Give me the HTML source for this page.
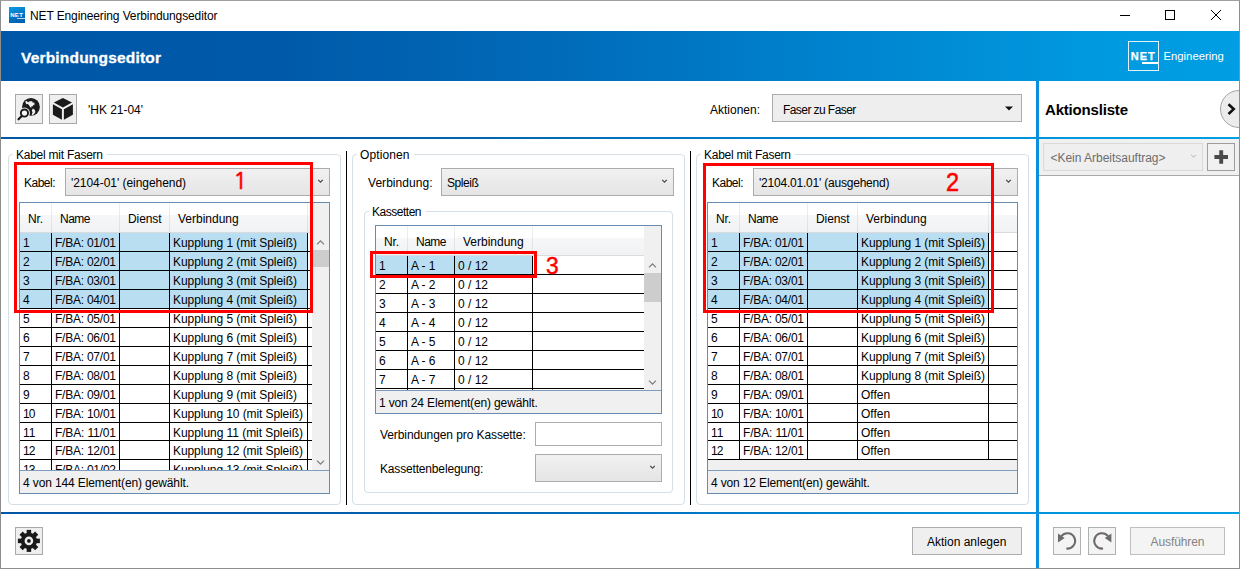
<!DOCTYPE html>
<html lang="de"><head><meta charset="utf-8"><title>NET Engineering Verbindungseditor</title>
<style>
*{box-sizing:border-box;margin:0;padding:0}
html,body{width:1240px;height:569px;overflow:hidden;background:#fff}
body{font-family:"Liberation Sans",sans-serif;font-size:12px;color:#000;position:relative}
.a{position:absolute}
.t{position:absolute;white-space:nowrap;line-height:16px;height:16px}
.b{font-weight:bold}
.win{position:absolute;left:0;top:0;width:1240px;height:569px;border:1px solid #8d8d8d;border-top-color:#a0a0a0;pointer-events:none;z-index:50}
.hdr{position:absolute;left:1px;top:31px;width:1238px;height:50px;background:linear-gradient(to right,#0057a7 0%,#0059a9 22%,#006bb9 45%,#0084cf 68%,#0099df 88%,#009ee3 100%)}
.hline{position:absolute;left:1px;width:1238px;height:2px;background:linear-gradient(to right,#0057a7 0%,#0059a9 22%,#006bb9 45%,#0084cf 68%,#0099df 88%,#009ee3 100%)}
.vline{position:absolute;left:1036px;top:81px;width:3px;height:487px;background:#0a8fdc}
.btn{position:absolute;background:#efefef;border:1px solid #a9a9a9}
.gb{position:absolute;border:1px solid #d5dfe5;border-radius:4px}
.gbl{position:absolute;background:#fff;height:14px}
.combo{position:absolute;height:28px;border:1px solid #acacac;background:linear-gradient(#f1f1f1,#e5e5e5)}
.chev{position:absolute;width:7px;height:4px;overflow:visible}
.lv{position:absolute;border:1px solid #688caf;background:#fff;overflow:hidden}
.lh{position:absolute;left:0;top:0;height:30px;width:100%;background:linear-gradient(#ffffff 0%,#ffffff 40%,#f6f7f9 41%,#f1f2f4 100%);border-bottom:1px solid #d9dbde}
.hs{position:absolute;top:0;width:1px;height:29px;background:linear-gradient(#f0f0f0,#dcdddf)}
.row{position:absolute;left:0;height:19px;border-bottom:1px solid #000}
.sel{position:absolute;left:0;height:19px;background:#b9def1}
.cv{position:absolute;width:1px;background:#000}
.c{position:absolute;white-space:nowrap;line-height:19px;height:19px}
.st{position:absolute;left:0;background:#f0f0f0;border-top:1px solid #7f9cbf}
.sb{position:absolute;background:#f0f0f0;width:17px}
.th{position:absolute;background:#cdcdcd}
.red{position:absolute;border:3px solid #ff0000;z-index:20}
.num{position:absolute;color:#ff0000;font-size:24px;line-height:28px;height:28px;z-index:21;white-space:nowrap;-webkit-text-stroke:0.5px #ff0000;transform-origin:0 50%;transform:scaleX(0.93)}
.split{position:absolute;width:1px;background:#000;top:151px;height:354px}
</style></head>
<body>
<div class="a" style="left:9px;top:7px;width:16px;height:16px;background:linear-gradient(160deg,#0b9be2 0%,#0577c6 50%,#0058a8 100%);overflow:hidden"><div class="a b" style="left:1.2px;top:4.6px;font-size:6px;line-height:7px;color:#fff;letter-spacing:0.35px">NET</div><div class="a" style="left:8px;top:11.4px;width:8px;height:0.8px;background:#b9dcf3"></div></div>
<div class="t ttl" style="left:30px;top:7.99px;letter-spacing:-0.117px;">NET Engineering Verbindungseditor</div>
<svg class="a" style="left:1110px;top:1px" width="128" height="30" viewBox="0 0 128 30"><path d="M10 14.5h10" stroke="#000" stroke-width="1" fill="none"/><rect x="55.5" y="9.5" width="9" height="9" stroke="#000" stroke-width="1" fill="none"/><path d="M101 9l10 10M111 9l-10 10" stroke="#000" stroke-width="1" fill="none"/></svg>
<div class="hdr"></div>
<div class="t b hd" style="left:21px;top:47.78px;letter-spacing:0.192px;color:#fff;font-size:15.5px;line-height:20px;height:20px;-webkit-text-stroke:0.3px #fff;">Verbindungseditor</div>
<div class="a" style="left:1128px;top:41px;width:31px;height:30px;border:1px solid rgba(255,255,255,0.88)"></div>
<div class="t b" style="left:1130.8px;top:49.3px;color:#fff;font-size:11px;letter-spacing:1px;line-height:14px;-webkit-text-stroke:0.25px #fff">NET</div>
<div class="a" style="left:1142px;top:62px;width:16px;height:1.5px;background:#fff"></div>
<div class="t" style="left:1163.5px;top:49px;color:#fff;font-size:11.3px;line-height:14px">Engineering</div>
<div class="btn" style="left:15px;top:94px;width:28px;height:30px"></div>
<div class="btn" style="left:49px;top:94px;width:28px;height:30px"></div>
<svg class="a" style="left:15px;top:94px" width="28" height="30" viewBox="0 0 28 30">
<circle cx="15.95" cy="12.9" r="8.9" fill="#1a1a1a"/>
<path d="M10.16 7.69 L11.78 6.68 L12.94 8.38 L14.64 7.15 L17.57 7.15 L17.11 8.38 L19.12 8.54 L19.82 10.55 L18.35 11.01 L17.88 12.25 L16.49 12.25 L16.18 13.95 L14.95 12.87 L13.87 11.01 L12.78 9.93 L11.39 10.24 Z" fill="#f0f0f0"/>
<path d="M17.88 14.57 L19.74 15.65 L20.36 17.97 L18.97 20.13 L17.27 21.37 L16.65 20.44 L17.57 18.58 L16.80 16.42 Z" fill="#f0f0f0"/>
<circle cx="9.45" cy="19.05" r="5.5" fill="#efefef"/>
<circle cx="9.45" cy="19.05" r="3.6" fill="#f6f6f6" stroke="#1a1a1a" stroke-width="1.9"/>
<path d="M6.5 22.2 L3.5 25.3" stroke="#1a1a1a" stroke-width="2.2" stroke-linecap="round"/>
</svg>
<svg class="a" style="left:49px;top:94px" width="28" height="30" viewBox="0 0 28 30">
<path d="M13.9 4 L23 8.4 L13.9 13.4 L4.8 8.4 Z" fill="#1a1a1a"/>
<path d="M3.9 10.2 L12.9 15.2 L12.9 25.8 L3.9 20.8 Z" fill="#1a1a1a"/>
<path d="M23.9 10.2 L14.9 15.2 L14.9 25.8 L23.9 20.8 Z" fill="#1a1a1a"/>
</svg>
<div class="t" style="left:88px;top:101.99px;letter-spacing:-0.031px;">&#x27;HK 21-04&#x27;</div>
<div class="t" style="left:710px;top:101.99px;">Aktionen:</div>
<div class="combo" style="left:772px;top:94px;width:250px;background:#eeeeee"></div>
<div class="t" style="left:783px;top:101.99px;letter-spacing:-0.572px;">Faser zu Faser</div>
<svg class="a" style="left:1004px;top:106px" width="10" height="5" viewBox="0 0 10 5"><path d="M1 0.5h8L5 4.5z" fill="#111"/></svg>
<div class="t b" style="left:1045px;top:99.95px;letter-spacing:-0.184px;font-size:15px;line-height:20px;height:20px;">Aktionsliste</div>
<div class="a" style="left:1220px;top:90px;width:38px;height:38px;border-radius:50%;background:#ececec;border:1.4px solid #a4a4a4"></div>
<svg class="a" style="left:1224px;top:100px" width="14" height="18" viewBox="0 0 14 18"><path d="M4.5 4.2 L9.7 9.1 L4.5 14" stroke="#111" stroke-width="2.6" fill="none" stroke-linejoin="miter"/></svg>
<div class="hline" style="top:137px"></div>
<div class="hline" style="top:512px"></div>
<div class="vline"></div>
<div class="a" style="left:1039px;top:139px;width:200px;height:37px;background:#f0f0f0;border-bottom:1px solid #a8a8a8"></div>
<div class="a" style="left:1043px;top:143px;width:160px;height:28px;border:1px solid #d9d9d9;background:#efefef"></div>
<div class="t" style="left:1050.5px;top:149.99px;letter-spacing:-0.021px;color:#6d6d6d;">&lt;Kein Arbeitsauftrag&gt;</div>
<svg class="chev" style="left:1190.2px;top:154.3px" viewBox="0 0 7 4"><path d="M1.2 0.9 L3.5 3.2 L5.8 0.9" stroke="#b0b0b0" stroke-width="1" fill="none"/></svg>
<div class="btn" style="left:1207px;top:143px;width:28px;height:28px;background:#f1f1f1;border-color:#9d9d9d"></div>
<svg class="a" style="left:1207px;top:143px" width="28" height="28" viewBox="0 0 28 28"><path d="M14.2 7.2v13.6M7.4 14h13.6" stroke="#4a4a4a" stroke-width="3.9" fill="none"/></svg>
<div class="gb" style="left:8px;top:154px;width:333px;height:351px"></div>
<div class="gbl" style="left:13px;top:147px;width:94px"></div>
<div class="t" style="left:16px;top:146.99px;letter-spacing:-0.247px;">Kabel mit Fasern</div>
<div class="gb" style="left:352px;top:154px;width:333px;height:351px"></div>
<div class="gbl" style="left:357px;top:147px;width:57px"></div>
<div class="t" style="left:360px;top:146.99px;letter-spacing:0.114px;">Optionen</div>
<div class="gb" style="left:696px;top:154px;width:333px;height:351px"></div>
<div class="gbl" style="left:701px;top:147px;width:94px"></div>
<div class="t" style="left:704px;top:146.99px;letter-spacing:-0.247px;">Kabel mit Fasern</div>
<div class="split" style="left:346px"></div>
<div class="split" style="left:690px"></div>
<div class="t" style="left:24px;top:174.99px;letter-spacing:-0.505px;">Kabel:</div>
<div class="combo" style="left:65px;top:168px;width:265px"></div>
<div class="t" style="left:71px;top:174.99px;letter-spacing:-0.050px;">&#x27;2104-01&#x27; (eingehend)</div>
<svg class="chev" style="left:317px;top:179px" viewBox="0 0 7 4"><path d="M1.2 0.9 L3.5 3.2 L5.8 0.9" stroke="#454545" stroke-width="1.2" fill="none"/></svg>
<div class="lv" style="left:19px;top:202px;width:311px;height:292px">
<div class="lh"></div>
<div class="hs" style="left:31px"></div>
<div class="hs" style="left:99px"></div>
<div class="hs" style="left:149px"></div>
<div class="hs" style="left:287px"></div>
<div class="c" style="left:8px;top:6.5px;letter-spacing:-0.167px;">Nr.</div>
<div class="c" style="left:40px;top:6.5px;letter-spacing:-0.504px;">Name</div>
<div class="c" style="left:108px;top:6.5px;letter-spacing:-0.103px;">Dienst</div>
<div class="c" style="left:158px;top:6.5px;">Verbindung</div>
<div class="a" style="left:0;top:30px;width:309px;height:237px;overflow:hidden">
<div class="sel" style="top:0;width:287px;height:76px"></div>
<div class="row" style="top:0px;width:292px;height:19px"></div>
<div class="c" style="left:3px;top:0.5px;">1</div>
<div class="c" style="left:35px;top:0.5px;letter-spacing:-0.237px;">F/BA: 01/01</div>
<div class="c" style="left:153px;top:0.5px;letter-spacing:-0.068px;">Kupplung 1 (mit Spleiß)</div>
<div class="row" style="top:19px;width:292px;height:19px"></div>
<div class="c" style="left:3px;top:19.5px;">2</div>
<div class="c" style="left:35px;top:19.5px;letter-spacing:-0.237px;">F/BA: 02/01</div>
<div class="c" style="left:153px;top:19.5px;letter-spacing:-0.068px;">Kupplung 2 (mit Spleiß)</div>
<div class="row" style="top:38px;width:292px;height:19px"></div>
<div class="c" style="left:3px;top:38.5px;">3</div>
<div class="c" style="left:35px;top:38.5px;letter-spacing:-0.237px;">F/BA: 03/01</div>
<div class="c" style="left:153px;top:38.5px;letter-spacing:-0.068px;">Kupplung 3 (mit Spleiß)</div>
<div class="row" style="top:57px;width:292px;height:19px"></div>
<div class="c" style="left:3px;top:57.5px;">4</div>
<div class="c" style="left:35px;top:57.5px;letter-spacing:-0.237px;">F/BA: 04/01</div>
<div class="c" style="left:153px;top:57.5px;letter-spacing:-0.068px;">Kupplung 4 (mit Spleiß)</div>
<div class="row" style="top:76px;width:292px;height:19px"></div>
<div class="c" style="left:3px;top:76.5px;">5</div>
<div class="c" style="left:35px;top:76.5px;letter-spacing:-0.237px;">F/BA: 05/01</div>
<div class="c" style="left:153px;top:76.5px;letter-spacing:-0.068px;">Kupplung 5 (mit Spleiß)</div>
<div class="row" style="top:95px;width:292px;height:19px"></div>
<div class="c" style="left:3px;top:95.5px;">6</div>
<div class="c" style="left:35px;top:95.5px;letter-spacing:-0.237px;">F/BA: 06/01</div>
<div class="c" style="left:153px;top:95.5px;letter-spacing:-0.068px;">Kupplung 6 (mit Spleiß)</div>
<div class="row" style="top:114px;width:292px;height:19px"></div>
<div class="c" style="left:3px;top:114.5px;">7</div>
<div class="c" style="left:35px;top:114.5px;letter-spacing:-0.237px;">F/BA: 07/01</div>
<div class="c" style="left:153px;top:114.5px;letter-spacing:-0.068px;">Kupplung 7 (mit Spleiß)</div>
<div class="row" style="top:133px;width:292px;height:19px"></div>
<div class="c" style="left:3px;top:133.5px;">8</div>
<div class="c" style="left:35px;top:133.5px;letter-spacing:-0.237px;">F/BA: 08/01</div>
<div class="c" style="left:153px;top:133.5px;letter-spacing:-0.068px;">Kupplung 8 (mit Spleiß)</div>
<div class="row" style="top:152px;width:292px;height:19px"></div>
<div class="c" style="left:3px;top:152.5px;">9</div>
<div class="c" style="left:35px;top:152.5px;letter-spacing:-0.237px;">F/BA: 09/01</div>
<div class="c" style="left:153px;top:152.5px;letter-spacing:-0.068px;">Kupplung 9 (mit Spleiß)</div>
<div class="row" style="top:171px;width:292px;height:19px"></div>
<div class="c" style="left:3px;top:171.5px;letter-spacing:-0.848px;">10</div>
<div class="c" style="left:35px;top:171.5px;letter-spacing:-0.237px;">F/BA: 10/01</div>
<div class="c" style="left:153px;top:171.5px;letter-spacing:-0.090px;">Kupplung 10 (mit Spleiß)</div>
<div class="row" style="top:190px;width:292px;height:18px"></div>
<div class="c" style="left:3px;top:190.5px;letter-spacing:0.043px;">11</div>
<div class="c" style="left:35px;top:190.5px;letter-spacing:-0.148px;">F/BA: 11/01</div>
<div class="c" style="left:153px;top:190.5px;letter-spacing:-0.051px;">Kupplung 11 (mit Spleiß)</div>
<div class="row" style="top:208px;width:292px;height:19px"></div>
<div class="c" style="left:3px;top:208.5px;letter-spacing:-0.848px;">12</div>
<div class="c" style="left:35px;top:208.5px;letter-spacing:-0.237px;">F/BA: 12/01</div>
<div class="c" style="left:153px;top:208.5px;letter-spacing:-0.090px;">Kupplung 12 (mit Spleiß)</div>
<div class="row" style="top:227px;width:292px;height:19px"></div>
<div class="c" style="left:3px;top:227.5px;letter-spacing:-0.848px;">13</div>
<div class="c" style="left:35px;top:227.5px;letter-spacing:-0.237px;">F/BA: 01/02</div>
<div class="c" style="left:153px;top:227.5px;letter-spacing:-0.090px;">Kupplung 13 (mit Spleiß)</div>
<div class="cv" style="left:31px;top:0;height:237px"></div>
<div class="cv" style="left:99px;top:0;height:237px"></div>
<div class="cv" style="left:149px;top:0;height:237px"></div>
<div class="cv" style="left:287px;top:0;height:237px"></div>
</div>
<div class="sb" style="left:292px;top:0px;height:267px"></div>
<div class="th" style="left:292px;top:47px;width:17px;height:17px"></div>
<div class="st" style="top:267px;width:309px;height:23px"></div>
<div class="c" style="left:3px;top:270.5px;letter-spacing:-0.119px;">4 von 144 Element(en) gewählt.</div>
</div>
<svg class="a" style="left:316px;top:239.5px" width="9" height="5" viewBox="0 0 9 5"><path d="M1 4.4 L4.5 0.9 L8 4.4" stroke="#7d7d7d" stroke-width="1.25" fill="none"/></svg>
<svg class="a" style="left:316px;top:459.5px" width="9" height="5" viewBox="0 0 9 5"><path d="M1 0.6 L4.5 4.1 L8 0.6" stroke="#7d7d7d" stroke-width="1.25" fill="none"/></svg>
<div class="t" style="left:368px;top:174.99px;letter-spacing:0.044px;">Verbindung:</div>
<div class="combo" style="left:441px;top:168px;width:233px"></div>
<div class="t" style="left:447px;top:174.99px;letter-spacing:-0.453px;">Spleiß</div>
<svg class="chev" style="left:661px;top:179px" viewBox="0 0 7 4"><path d="M1.2 0.9 L3.5 3.2 L5.8 0.9" stroke="#454545" stroke-width="1.2" fill="none"/></svg>
<div class="gb" style="left:364px;top:211px;width:309px;height:282px"></div>
<div class="gbl" style="left:369px;top:204px;width:57px"></div>
<div class="t" style="left:372px;top:203.99px;letter-spacing:-0.484px;">Kassetten</div>
<div class="lv" style="left:375px;top:225px;width:287px;height:189px">
<div class="lh"></div>
<div class="hs" style="left:31px"></div>
<div class="hs" style="left:78px"></div>
<div class="hs" style="left:156px"></div>
<div class="c" style="left:8px;top:6.5px;letter-spacing:-0.167px;">Nr.</div>
<div class="c" style="left:40px;top:6.5px;letter-spacing:-0.504px;">Name</div>
<div class="c" style="left:87px;top:6.5px;">Verbindung</div>
<div class="a" style="left:0;top:30px;width:285px;height:134px;overflow:hidden">
<div class="sel" style="top:0;width:156px;height:19px"></div>
<div class="row" style="top:0px;width:268px;height:19px"></div>
<div class="c" style="left:3px;top:0.5px;">1</div>
<div class="c" style="left:35px;top:0.5px;letter-spacing:-0.045px;">A - 1</div>
<div class="c" style="left:82px;top:0.5px;">0 / 12</div>
<div class="row" style="top:19px;width:268px;height:19px"></div>
<div class="c" style="left:3px;top:19.5px;">2</div>
<div class="c" style="left:35px;top:19.5px;letter-spacing:-0.045px;">A - 2</div>
<div class="c" style="left:82px;top:19.5px;">0 / 12</div>
<div class="row" style="top:38px;width:268px;height:19px"></div>
<div class="c" style="left:3px;top:38.5px;">3</div>
<div class="c" style="left:35px;top:38.5px;letter-spacing:-0.045px;">A - 3</div>
<div class="c" style="left:82px;top:38.5px;">0 / 12</div>
<div class="row" style="top:57px;width:268px;height:19px"></div>
<div class="c" style="left:3px;top:57.5px;">4</div>
<div class="c" style="left:35px;top:57.5px;letter-spacing:-0.045px;">A - 4</div>
<div class="c" style="left:82px;top:57.5px;">0 / 12</div>
<div class="row" style="top:76px;width:268px;height:19px"></div>
<div class="c" style="left:3px;top:76.5px;">5</div>
<div class="c" style="left:35px;top:76.5px;letter-spacing:-0.045px;">A - 5</div>
<div class="c" style="left:82px;top:76.5px;">0 / 12</div>
<div class="row" style="top:95px;width:268px;height:19px"></div>
<div class="c" style="left:3px;top:95.5px;">6</div>
<div class="c" style="left:35px;top:95.5px;letter-spacing:-0.045px;">A - 6</div>
<div class="c" style="left:82px;top:95.5px;">0 / 12</div>
<div class="row" style="top:114px;width:268px;height:19px"></div>
<div class="c" style="left:3px;top:114.5px;">7</div>
<div class="c" style="left:35px;top:114.5px;letter-spacing:-0.045px;">A - 7</div>
<div class="c" style="left:82px;top:114.5px;">0 / 12</div>
<div class="row" style="top:133px;width:268px;height:19px"></div>
<div class="c" style="left:3px;top:133.5px;">8</div>
<div class="c" style="left:35px;top:133.5px;letter-spacing:-0.045px;">A - 8</div>
<div class="c" style="left:82px;top:133.5px;">0 / 12</div>
<div class="cv" style="left:31px;top:0;height:134px"></div>
<div class="cv" style="left:78px;top:0;height:134px"></div>
<div class="cv" style="left:156px;top:0;height:134px"></div>
</div>
<div class="sb" style="left:268px;top:0px;height:164px"></div>
<div class="th" style="left:268px;top:47px;width:17px;height:29px"></div>
<div class="st" style="top:164px;width:285px;height:23px"></div>
<div class="c" style="left:3px;top:167.5px;letter-spacing:-0.143px;">1 von 24 Element(en) gewählt.</div>
</div>
<svg class="a" style="left:648px;top:262.5px" width="9" height="5" viewBox="0 0 9 5"><path d="M1 4.4 L4.5 0.9 L8 4.4" stroke="#7d7d7d" stroke-width="1.25" fill="none"/></svg>
<svg class="a" style="left:648px;top:379.5px" width="9" height="5" viewBox="0 0 9 5"><path d="M1 0.6 L4.5 4.1 L8 0.6" stroke="#7d7d7d" stroke-width="1.25" fill="none"/></svg>
<div class="t" style="left:380px;top:426.99px;letter-spacing:-0.094px;">Verbindungen pro Kassette:</div>
<div class="a" style="left:535px;top:422px;width:127px;height:24px;border:1px solid #abadb3;background:#fff"></div>
<div class="t" style="left:380px;top:460.99px;letter-spacing:-0.167px;">Kassettenbelegung:</div>
<div class="combo" style="left:535px;top:454px;width:127px"></div>
<svg class="chev" style="left:649px;top:465px" viewBox="0 0 7 4"><path d="M1.2 0.9 L3.5 3.2 L5.8 0.9" stroke="#454545" stroke-width="1.2" fill="none"/></svg>
<div class="t" style="left:712px;top:174.99px;letter-spacing:-0.505px;">Kabel:</div>
<div class="combo" style="left:753px;top:168px;width:265px"></div>
<div class="t" style="left:759px;top:174.99px;letter-spacing:-0.211px;">&#x27;2104.01.01&#x27; (ausgehend)</div>
<svg class="chev" style="left:1005px;top:179px" viewBox="0 0 7 4"><path d="M1.2 0.9 L3.5 3.2 L5.8 0.9" stroke="#454545" stroke-width="1.2" fill="none"/></svg>
<div class="lv" style="left:707px;top:202px;width:311px;height:292px">
<div class="lh"></div>
<div class="hs" style="left:31px"></div>
<div class="hs" style="left:99px"></div>
<div class="hs" style="left:149px"></div>
<div class="hs" style="left:280px"></div>
<div class="c" style="left:8px;top:6.5px;letter-spacing:-0.167px;">Nr.</div>
<div class="c" style="left:40px;top:6.5px;letter-spacing:-0.504px;">Name</div>
<div class="c" style="left:108px;top:6.5px;letter-spacing:-0.103px;">Dienst</div>
<div class="c" style="left:158px;top:6.5px;">Verbindung</div>
<div class="a" style="left:0;top:30px;width:309px;height:237px;overflow:hidden">
<div class="sel" style="top:0;width:280px;height:76px"></div>
<div class="row" style="top:0px;width:309px;height:19px"></div>
<div class="c" style="left:3px;top:0.5px;">1</div>
<div class="c" style="left:35px;top:0.5px;letter-spacing:-0.237px;">F/BA: 01/01</div>
<div class="c" style="left:153px;top:0.5px;letter-spacing:-0.068px;">Kupplung 1 (mit Spleiß)</div>
<div class="row" style="top:19px;width:309px;height:19px"></div>
<div class="c" style="left:3px;top:19.5px;">2</div>
<div class="c" style="left:35px;top:19.5px;letter-spacing:-0.237px;">F/BA: 02/01</div>
<div class="c" style="left:153px;top:19.5px;letter-spacing:-0.068px;">Kupplung 2 (mit Spleiß)</div>
<div class="row" style="top:38px;width:309px;height:19px"></div>
<div class="c" style="left:3px;top:38.5px;">3</div>
<div class="c" style="left:35px;top:38.5px;letter-spacing:-0.237px;">F/BA: 03/01</div>
<div class="c" style="left:153px;top:38.5px;letter-spacing:-0.068px;">Kupplung 3 (mit Spleiß)</div>
<div class="row" style="top:57px;width:309px;height:19px"></div>
<div class="c" style="left:3px;top:57.5px;">4</div>
<div class="c" style="left:35px;top:57.5px;letter-spacing:-0.237px;">F/BA: 04/01</div>
<div class="c" style="left:153px;top:57.5px;letter-spacing:-0.068px;">Kupplung 4 (mit Spleiß)</div>
<div class="row" style="top:76px;width:309px;height:19px"></div>
<div class="c" style="left:3px;top:76.5px;">5</div>
<div class="c" style="left:35px;top:76.5px;letter-spacing:-0.237px;">F/BA: 05/01</div>
<div class="c" style="left:153px;top:76.5px;letter-spacing:-0.068px;">Kupplung 5 (mit Spleiß)</div>
<div class="row" style="top:95px;width:309px;height:19px"></div>
<div class="c" style="left:3px;top:95.5px;">6</div>
<div class="c" style="left:35px;top:95.5px;letter-spacing:-0.237px;">F/BA: 06/01</div>
<div class="c" style="left:153px;top:95.5px;letter-spacing:-0.068px;">Kupplung 6 (mit Spleiß)</div>
<div class="row" style="top:114px;width:309px;height:19px"></div>
<div class="c" style="left:3px;top:114.5px;">7</div>
<div class="c" style="left:35px;top:114.5px;letter-spacing:-0.237px;">F/BA: 07/01</div>
<div class="c" style="left:153px;top:114.5px;letter-spacing:-0.068px;">Kupplung 7 (mit Spleiß)</div>
<div class="row" style="top:133px;width:309px;height:19px"></div>
<div class="c" style="left:3px;top:133.5px;">8</div>
<div class="c" style="left:35px;top:133.5px;letter-spacing:-0.237px;">F/BA: 08/01</div>
<div class="c" style="left:153px;top:133.5px;letter-spacing:-0.068px;">Kupplung 8 (mit Spleiß)</div>
<div class="row" style="top:152px;width:309px;height:19px"></div>
<div class="c" style="left:3px;top:152.5px;">9</div>
<div class="c" style="left:35px;top:152.5px;letter-spacing:-0.237px;">F/BA: 09/01</div>
<div class="c" style="left:153px;top:152.5px;letter-spacing:0.029px;">Offen</div>
<div class="row" style="top:171px;width:309px;height:19px"></div>
<div class="c" style="left:3px;top:171.5px;letter-spacing:-0.848px;">10</div>
<div class="c" style="left:35px;top:171.5px;letter-spacing:-0.237px;">F/BA: 10/01</div>
<div class="c" style="left:153px;top:171.5px;letter-spacing:0.029px;">Offen</div>
<div class="row" style="top:190px;width:309px;height:18px"></div>
<div class="c" style="left:3px;top:190.5px;letter-spacing:0.043px;">11</div>
<div class="c" style="left:35px;top:190.5px;letter-spacing:-0.148px;">F/BA: 11/01</div>
<div class="c" style="left:153px;top:190.5px;letter-spacing:0.029px;">Offen</div>
<div class="row" style="top:208px;width:309px;height:19px"></div>
<div class="c" style="left:3px;top:208.5px;letter-spacing:-0.848px;">12</div>
<div class="c" style="left:35px;top:208.5px;letter-spacing:-0.237px;">F/BA: 12/01</div>
<div class="c" style="left:153px;top:208.5px;letter-spacing:0.029px;">Offen</div>
<div class="a" style="left:0;top:227px;width:309px;height:10px;background:#f0f0f0"></div>
<div class="cv" style="left:31px;top:0;height:227px"></div>
<div class="cv" style="left:99px;top:0;height:227px"></div>
<div class="cv" style="left:149px;top:0;height:227px"></div>
<div class="cv" style="left:280px;top:0;height:227px"></div>
</div>
<div class="st" style="top:267px;width:309px;height:23px"></div>
<div class="c" style="left:3px;top:270.5px;letter-spacing:-0.143px;">4 von 12 Element(en) gewählt.</div>
</div>
<div class="red" style="left:14px;top:162px;width:299px;height:151px"></div>
<div class="red" style="left:703px;top:163px;width:291px;height:150px"></div>
<div class="red" style="left:370.4px;top:250.5px;width:166.5px;height:27px"></div>
<div class="num" style="left:233.3px;top:167.4px;font-family:'NanumGothic','Liberation Sans',sans-serif;font-size:23.2px;transform:none;-webkit-text-stroke:0.7px #f00">1</div>
<div class="num" style="left:946px;top:168.2px;font-size:25.4px">2</div>
<div class="num" style="left:545.5px;top:251.5px;font-size:24.5px">3</div>
<div class="btn" style="left:15px;top:527px;width:28px;height:28px"></div>
<svg class="a" style="left:15px;top:527px" width="28" height="28" viewBox="0 0 28 28"><g fill="#1a1a1a"><rect x="11.65" y="2.9000000000000004" width="4.5" height="6.0" transform="rotate(0.0 13.9 13.9)"/><rect x="11.65" y="2.9000000000000004" width="4.5" height="6.0" transform="rotate(45.0 13.9 13.9)"/><rect x="11.65" y="2.9000000000000004" width="4.5" height="6.0" transform="rotate(90.0 13.9 13.9)"/><rect x="11.65" y="2.9000000000000004" width="4.5" height="6.0" transform="rotate(135.0 13.9 13.9)"/><rect x="11.65" y="2.9000000000000004" width="4.5" height="6.0" transform="rotate(180.0 13.9 13.9)"/><rect x="11.65" y="2.9000000000000004" width="4.5" height="6.0" transform="rotate(225.0 13.9 13.9)"/><rect x="11.65" y="2.9000000000000004" width="4.5" height="6.0" transform="rotate(270.0 13.9 13.9)"/><rect x="11.65" y="2.9000000000000004" width="4.5" height="6.0" transform="rotate(315.0 13.9 13.9)"/><circle cx="13.9" cy="13.9" r="8.1"/></g><circle cx="13.9" cy="13.9" r="4.3" fill="#f0f0f0"/><circle cx="13.9" cy="13.9" r="1.9" fill="#1a1a1a"/></svg>
<div class="btn" style="left:912px;top:527px;width:110px;height:28px;border-color:#adadad;background:#efefef"></div>
<div class="t" style="left:927px;top:533.99px;">Aktion anlegen</div>
<div class="btn" style="left:1053px;top:527px;width:28px;height:28px;border-color:#adb2b5;background:#f4f4f4"></div>
<div class="btn" style="left:1088px;top:527px;width:28px;height:28px;border-color:#adb2b5;background:#f4f4f4"></div>
<svg class="a" style="left:1053px;top:527px" width="28" height="28" viewBox="0 0 28 28"><path d="M8.33 9.16 A7.7 7.7 0 1 1 13.33 21.53" stroke="#6b6b6b" stroke-width="2.1" fill="none"/><path d="M5.0 6.6 L5.0 15.6 L11.6 11.0 Z" fill="#6b6b6b"/></svg>
<svg class="a" style="left:1088px;top:527px" width="28" height="28" viewBox="0 0 28 28"><g transform="translate(28.4 0) scale(-1 1)"><path d="M8.33 9.16 A7.7 7.7 0 1 1 13.33 21.53" stroke="#6b6b6b" stroke-width="2.1" fill="none"/><path d="M5.0 6.6 L5.0 15.6 L11.6 11.0 Z" fill="#6b6b6b"/></g></svg>
<div class="btn" style="left:1130px;top:527px;width:95px;height:28px;border-color:#bfbfbf;background:#f4f4f4"></div>
<div class="t" style="left:1150.5px;top:533.99px;letter-spacing:-0.088px;color:#838383;">Ausführen</div>
<div class="win"></div>
</body></html>
